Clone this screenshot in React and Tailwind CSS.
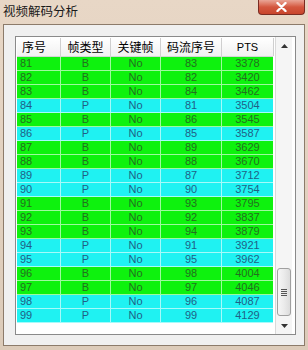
const rows = [
  ['81', 'B', 'No', '83', '3378'],
  ['82', 'B', 'No', '82', '3420'],
  ['83', 'B', 'No', '84', '3462'],
  ['84', 'P', 'No', '81', '3504'],
  ['85', 'B', 'No', '86', '3545'],
  ['86', 'P', 'No', '85', '3587'],
  ['87', 'B', 'No', '89', '3629'],
  ['88', 'B', 'No', '88', '3670'],
  ['89', 'P', 'No', '87', '3712'],
  ['90', 'P', 'No', '90', '3754'],
  ['91', 'B', 'No', '93', '3795'],
  ['92', 'B', 'No', '92', '3837'],
  ['93', 'B', 'No', '94', '3879'],
  ['94', 'P', 'No', '91', '3921'],
  ['95', 'P', 'No', '95', '3962'],
  ['96', 'B', 'No', '98', '4004'],
  ['97', 'B', 'No', '97', '4046'],
  ['98', 'P', 'No', '96', '4087'],
  ['99', 'P', 'No', '99', '4129'],
];

const cols = ['w-[44px]', 'w-[50px]', 'w-[50px]', 'w-[61px]', 'w-[52px]'];
const headers = ['序号', '帧类型', '关键帧', '码流序号', 'PTS'];

function Row({ r }) {
  const isB = r[1] === 'B';
  const rowCls = isB ? 'bg-[#0ef20e] text-[#236f1f]' : 'bg-[#1ff2f2] text-[#1f5f86]';
  return (
    <div className={`flex h-[14px] ${rowCls}`}>
      {r.map((v, i) => (
        <div
          key={i}
          className={`${cols[i]} shrink-0 border-r border-b border-white/60 text-[11px] leading-[13px] ${
            i === 0 ? 'pl-[3px] text-left' : 'text-center'
          }`}
        >
          {v}
        </div>
      ))}
    </div>
  );
}

function ScrollBar() {
  return (
    <div className="w-[17px] shrink-0 flex flex-col bg-[#f5f5f5] border-l border-[#d9d9d9]">
      <div className="h-[17px] flex items-center justify-center">
        <svg width="7" height="4" viewBox="0 0 7 4">
          <path d="M0 4 L3.5 0 L7 4 Z" fill="#333" />
        </svg>
      </div>
      <div className="flex-1 flex flex-col justify-end pb-[1px]">
        <div className="mx-[1px] h-[48px] rounded-[3px] border border-[#a0a0a0] bg-gradient-to-r from-[#f6f6f6] via-[#ebebeb] to-[#dcdcdc] flex flex-col items-center justify-center gap-[1px]">
          <div className="w-[6px] h-[1px] bg-[#555]" />
          <div className="w-[6px] h-[1px] bg-[#555]" />
          <div className="w-[6px] h-[1px] bg-[#555]" />
          <div className="w-[6px] h-[1px] bg-[#555]" />
        </div>
      </div>
      <div className="h-[17px] flex items-center justify-center">
        <svg width="7" height="4" viewBox="0 0 7 4">
          <path d="M0 0 L3.5 4 L7 0 Z" fill="#333" />
        </svg>
      </div>
    </div>
  );
}

export default function App() {
  return (
    <div className="w-[308px] h-[350px] flex flex-col overflow-hidden bg-gradient-to-b from-[#e8d7c6] to-[#dccbb9] font-['Liberation_Sans','Noto_Sans_CJK_SC',sans-serif]">
      <div className="h-[24px] shrink-0 flex items-start justify-between">
        <span className="pl-[3px] pt-[4px] text-[12.5px] leading-[14px] text-[#1a1a1a] font-['Noto_Sans_CJK_SC',sans-serif]">
          视频解码分析
        </span>
        <div className="w-[47px] h-[15px] mr-[3px] rounded-b-[4px] border border-t-0 border-[#7a2c22] bg-gradient-to-b from-[#e9a596] via-[#d4573f] to-[#c8452c] flex items-center justify-center">
          <svg width="11" height="10" viewBox="0 0 11 10">
            <path d="M1.5 1 L9.5 9 M9.5 1 L1.5 9" stroke="#fff" strokeWidth="2.4" strokeLinecap="round" />
          </svg>
        </div>
      </div>

      <div className="flex-1 flex mx-[3px] mb-[4px] border border-[#8c7b6a] bg-[#f0f0f0] pt-[11px] pl-[11px] pr-[8px] pb-[10px]">
        <div className="flex-1 flex border border-[#8a8a8a] bg-white">
          <div className="w-[257px] shrink-0 pl-[1px] pt-[1px] mr-[2px]">
            <div className="flex h-[19px] bg-gradient-to-b from-white to-[#f1f1f1] border-b border-[#d5d5d5]">
              {headers.map((h, i) => (
                <div
                  key={h}
                  className={`${cols[i]} shrink-0 border-r border-[#cfcfcf] flex items-center ${
                    i === 0 ? 'justify-start pl-[5px]' : 'justify-center'
                  } text-[12px] leading-[14px] text-black font-['Noto_Sans_CJK_SC',sans-serif]`}
                >
                  {h === 'PTS' ? <span className="font-['Liberation_Sans',sans-serif] text-[11px]">PTS</span> : h}
                </div>
              ))}
            </div>
            {rows.map((r) => (
              <Row key={r[0]} r={r} />
            ))}
          </div>
          <ScrollBar />
        </div>
      </div>
    </div>
  );
}
